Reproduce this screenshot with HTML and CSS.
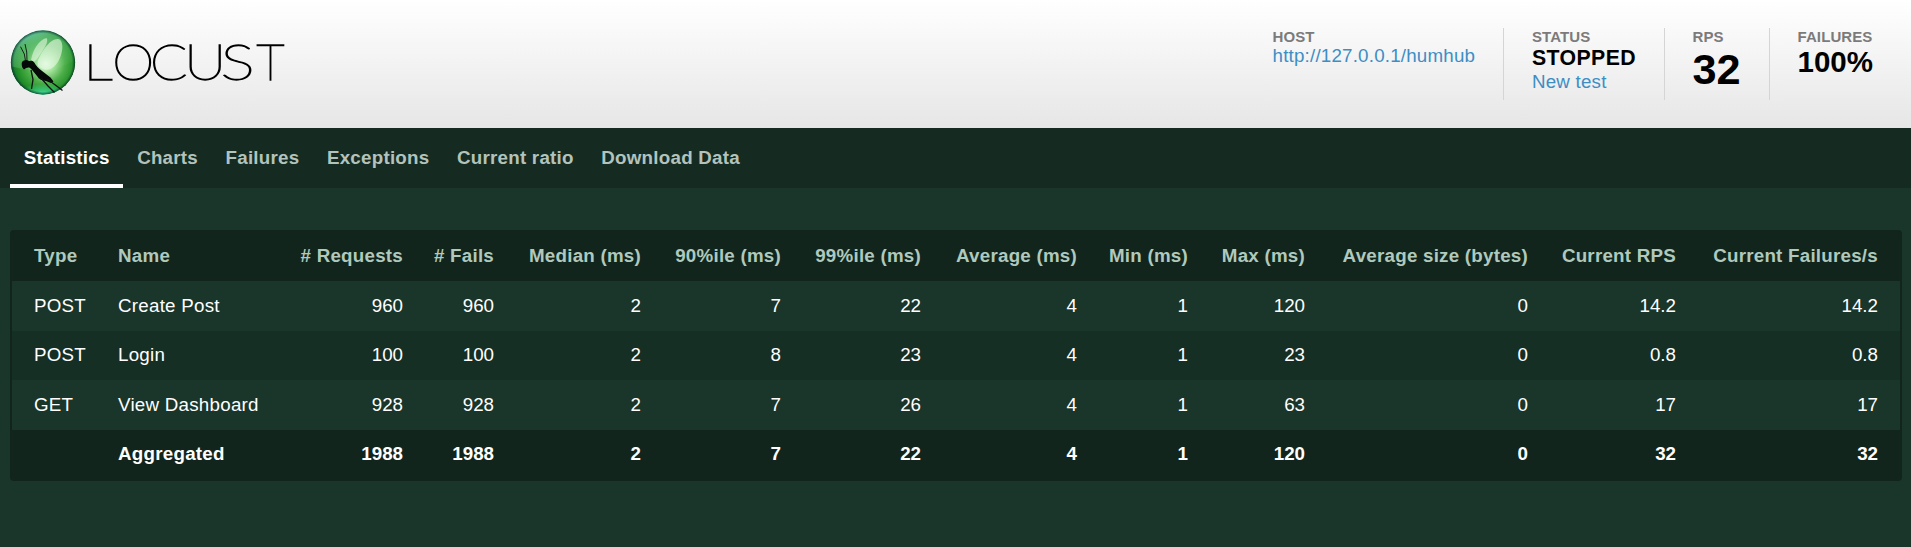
FILE: index.html
```html
<!DOCTYPE html>
<html lang="en">
<head>
<meta charset="utf-8">
<title>Locust</title>
<link rel="stylesheet" href="styles.css">
</head>
<body>
<header class="top">
  <div class="brand">
    <svg class="logo" viewBox="0 0 66 66" aria-hidden="true">
      <defs>
        <radialGradient id="ball" cx="0.54" cy="0.52" r="0.54">
          <stop offset="0" stop-color="#effff0"/>
          <stop offset="0.25" stop-color="#a5e39c"/>
          <stop offset="0.55" stop-color="#4cae48"/>
          <stop offset="0.82" stop-color="#238f28"/>
          <stop offset="1" stop-color="#0d6a30"/>
        </radialGradient>
        <linearGradient id="sheen" x1="0" y1="0" x2="0.7" y2="1">
          <stop offset="0" stop-color="#7fe6ee" stop-opacity="1"/>
          <stop offset="0.4" stop-color="#8adcae" stop-opacity="0.45"/>
          <stop offset="1" stop-color="#8fdc9d" stop-opacity="0.05"/>
        </linearGradient>
        <radialGradient id="rim" cx="0.5" cy="0.5" r="0.5">
          <stop offset="0.9" stop-color="#0a4030" stop-opacity="0"/>
          <stop offset="1" stop-color="#073025" stop-opacity="0.8"/>
        </radialGradient>
        <radialGradient id="glow" cx="0.5" cy="0.5" r="0.5">
          <stop offset="0" stop-color="#3fe0a0" stop-opacity="0.9"/>
          <stop offset="1" stop-color="#3fe0a0" stop-opacity="0"/>
        </radialGradient>
        <clipPath id="disc"><circle cx="33" cy="33.500" r="32.3"/></clipPath>
      </defs>
      <g clip-path="url(#disc)">
        <circle cx="33" cy="33.500" r="32.3" fill="url(#ball)"/>
        <ellipse cx="33" cy="64" rx="26" ry="9" fill="url(#glow)"/>
        <path d="M0 0H66V31C48 42 20 43 0 37Z" fill="url(#sheen)"/>
        <path d="M21 31C23 20 29 11 36.500 9C39.500 12 33 22 26.500 30.500L24 33Z" fill="#e6f8df" fill-opacity="0.6"/>
        <path d="M27.500 33C31 23 40 9.500 48 10C54 11 53.500 23 48.500 32C43 42 34 43 28 37Z" fill="#e9fae4" fill-opacity="0.62"/>
        <circle cx="33" cy="33.500" r="32.3" fill="url(#rim)"/>
      </g>
      <path d="M11.700 34C12 32 14 31 16.500 31C18 31 19 32.500 20 32C22 31 24 32 25.500 35.500C28 39 31 41 34 43.500L40.500 48.500L43.500 52.500L41 54L36 52C32 51.500 29 50.500 27 47C24 43.500 22.500 41 20 39C18 38 16 39 14.500 40.300C13 40.300 11.500 38 11.700 34Z" fill="#050a08"/>
      <path d="M15.500 32L14.300 25L10.500 17.700M17 31.500L16.700 23L15 15" class="limb"/>
      <path d="M21 41L23 50.500L21.500 60M31 49L38 57L44.500 63.500M37 50L46 56.500L52.500 61.500" class="limb leg"/>
    </svg>
    <svg class="wordmark" viewBox="0 0 200 66" role="img" aria-label="Locust">
      <text transform="translate(-5.8 50.500) scale(1.2 1)">L</text>
      <text transform="translate(23.200 50.500) scale(1.09 1)">O</text>
      <text transform="translate(61 50.500) scale(1.12 1)">C</text>
      <text transform="translate(94.900 50.500) scale(1.2 1)">U</text>
      <text transform="translate(131.500 50.500) scale(1.32 1)">S</text>
      <text transform="translate(167.500 50.500)">T</text>
    </svg>
  </div>
  <div class="boxes">
    <div class="box host"><div class="label">HOST</div><a class="link">http://127.0.0.1/humhub</a></div>
    <div class="box status"><div class="label">STATUS</div><div class="state">STOPPED</div><a class="link">New test</a></div>
    <div class="box rps"><div class="label">RPS</div><div class="big">32</div></div>
    <div class="box fail"><div class="label">FAILURES</div><div class="medium">100%</div></div>
  </div>
</header>
<nav class="tabs">
  <a class="tab active">Statistics</a><a class="tab">Charts</a><a class="tab">Failures</a><a class="tab">Exceptions</a><a class="tab">Current ratio</a><a class="tab">Download Data</a>
</nav>
<main class="content">
  <table class="stats">
    <colgroup>
      <col class="w-type"><col class="w-name"><col class="w-req"><col class="w-fails"><col class="w-median"><col class="w-pct"><col class="w-pct"><col class="w-avg"><col class="w-min"><col class="w-max"><col class="w-size"><col class="w-rps"><col class="w-fps">
    </colgroup>
    <thead>
      <tr><th>Type</th><th>Name</th><th># Requests</th><th># Fails</th><th>Median (ms)</th><th>90%ile (ms)</th><th>99%ile (ms)</th><th>Average (ms)</th><th>Min (ms)</th><th>Max (ms)</th><th>Average size (bytes)</th><th>Current RPS</th><th>Current Failures/s</th></tr>
    </thead>
    <tbody>
      <tr><td>POST</td><td>Create Post</td><td>960</td><td>960</td><td>2</td><td>7</td><td>22</td><td>4</td><td>1</td><td>120</td><td>0</td><td>14.2</td><td>14.2</td></tr>
      <tr class="alt"><td>POST</td><td>Login</td><td>100</td><td>100</td><td>2</td><td>8</td><td>23</td><td>4</td><td>1</td><td>23</td><td>0</td><td>0.8</td><td>0.8</td></tr>
      <tr><td>GET</td><td>View Dashboard</td><td>928</td><td>928</td><td>2</td><td>7</td><td>26</td><td>4</td><td>1</td><td>63</td><td>0</td><td>17</td><td>17</td></tr>
      <tr class="total"><td></td><td>Aggregated</td><td>1988</td><td>1988</td><td>2</td><td>7</td><td>22</td><td>4</td><td>1</td><td>120</td><td>0</td><td>32</td><td>32</td></tr>
    </tbody>
  </table>
</main>
</body>
</html>
```
FILE: styles.css
```css
* { box-sizing: border-box; }
body {
  margin: 0;
  min-height: 547px;
  background: #1a352a;
  color: #fff;
  font-family: "Liberation Sans", Arial, sans-serif;
  font-size: 18.75px;
}
.top {
  display: flex;
  justify-content: space-between;
  height: 128px;
  padding: 28px 10px 0;
  background: linear-gradient(#fff, #e6e6e6);
}
.brand { display: flex; gap: 13px; padding-top: 1px; }
.logo { width: 66px; height: 66px; }
.limb { fill: none; stroke: #0a1410; stroke-width: 0.9; }
.leg { stroke-width: 1.3; }
.wordmark { width: 200px; height: 66px; overflow: visible; }
.wordmark text {
  font-family: Lato, sans-serif;
  font-weight: 100;
  font-size: 49px;
  fill: #000;
  stroke: #000;
  stroke-width: 1.3px;
}

.boxes { display: flex; height: 72px; }
.box { padding: 0 0 0 27.5px; border-left: 1px solid #d4d5d4; }
.host { width: 259px; border-left-color: transparent; }
.status { width: 161px; padding-left: 28px; }
.rps { width: 105px; }
.fail { width: 132px; }
.label { height: 17px; font-size: 15px; line-height: 17px; font-weight: bold; color: #7b7b7b; letter-spacing: 0.1px; }
.link { display: block; line-height: 22px; color: #3d8ec4; letter-spacing: 0.2px; }
.state { font-size: 21.25px; line-height: 26px; font-weight: bold; color: #000; letter-spacing: 0.4px; }
.status .link { line-height: 21px; }
.big { font-size: 43.25px; line-height: 48px; font-weight: bold; color: #000; }
.medium { font-size: 29.5px; line-height: 33px; font-weight: bold; color: #000; }

.tabs { display: flex; height: 60px; padding: 0 10px; background: #152b22; }
.tab { padding: 19px 13.75px 0; line-height: 22px; font-weight: bold; color: #b3c3bc; letter-spacing: 0.25px; }
.active { color: #fff; border-bottom: 4px solid #fff; }

.content { padding: 42px 9px 0 10px; }
.stats {
  width: 100%;
  table-layout: fixed;
  border-collapse: separate;
  border-spacing: 0;
  border: 2px solid #11251c;
  border-top: 0;
  border-radius: 4px;
  background: #11251c;
  white-space: nowrap;
}
.stats th, .stats td { height: 50px; padding: 0 15px 1px 0; text-align: right; }
.stats th { height: 51px; padding-bottom: 0; color: #b0c9bd; letter-spacing: 0.24px; }
.stats .alt td, .stats .total td { height: 49px; }
.stats th:first-child, .stats td:first-child { padding-left: 22px; text-align: left; letter-spacing: 0.25px; }
.stats th:nth-child(2), .stats td:nth-child(2) { padding-left: 15px; text-align: left; letter-spacing: 0.25px; }
.stats th:last-child, .stats td:last-child { padding-right: 22px; }
.stats tbody tr { background: #1a352a; }
.stats tbody .alt { background: #162f25; }
.stats tbody .total { background: #11251c; font-weight: bold; }
.w-type { width: 91px; }
.w-name { width: 177px; }
.w-req { width: 138px; }
.w-fails { width: 91px; }
.w-median { width: 147px; }
.w-pct { width: 140px; }
.w-avg { width: 156px; }
.w-min { width: 111px; }
.w-max { width: 117px; }
.w-size { width: 223px; }
.w-rps { width: 148px; }
.w-fps { width: 209px; }
```
